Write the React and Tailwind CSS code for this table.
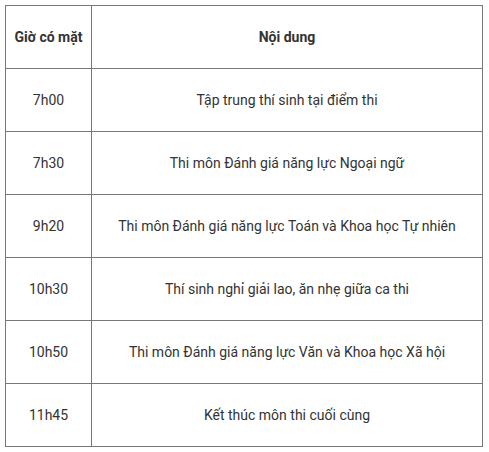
const rows = [
  ["7h00", "Tập trung thí sinh tại điểm thi"],
  ["7h30", "Thi môn Đánh giá năng lực Ngoại ngữ"],
  ["9h20", "Thi môn Đánh giá năng lực Toán và Khoa học Tự nhiên"],
  ["10h30", "Thí sinh nghỉ giải lao, ăn nhẹ giữa ca thi"],
  ["10h50", "Thi môn Đánh giá năng lực Văn và Khoa học Xã hội"],
  ["11h45", "Kết thúc môn thi cuối cùng"],
];

const App = () => {
  return (
    <div className="bg-white w-[489px] h-[452px] pt-[5px] pl-[5px] font-['Roboto',sans-serif] text-[14px] text-[#333]">
      <table className="w-[478px] border-collapse table-fixed">
        <colgroup>
          <col className="w-[86px]" />
          <col />
        </colgroup>
        <thead>
          <tr className="h-[63px]">
            <th className="border border-[#777] font-bold text-center">Giờ có mặt</th>
            <th className="border border-[#777] font-bold text-center">Nội dung</th>
          </tr>
        </thead>
        <tbody>
          {rows.map(([gio, noiDung]) => (
            <tr key={gio} className="h-[63px]">
              <td className="border border-[#777] text-center">{gio}</td>
              <td className="border border-[#777] text-center">{noiDung}</td>
            </tr>
          ))}
        </tbody>
      </table>
    </div>
  );
};

export default App;
